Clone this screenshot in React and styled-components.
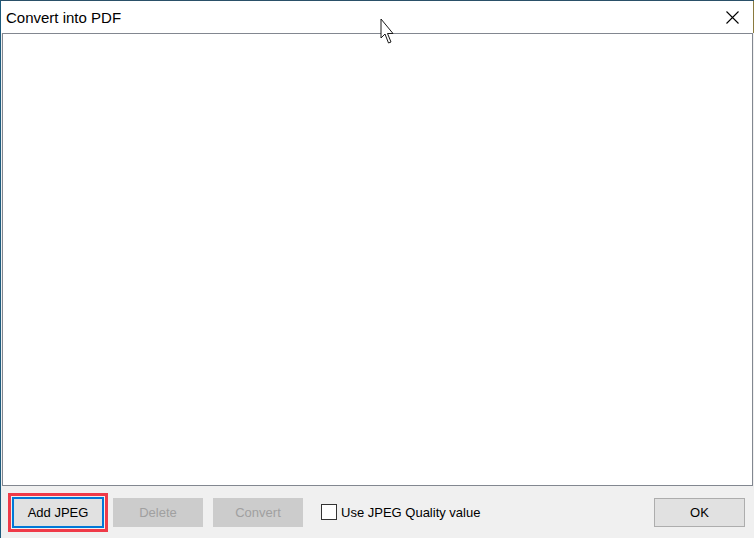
import React from 'react';
import styled, { createGlobalStyle } from 'styled-components';

const GlobalStyle = createGlobalStyle`
  html, body {
    margin: 0;
    padding: 0;
    background: #f0f0f0;
  }
  * {
    box-sizing: border-box;
  }
`;

const Window = styled.div`
  position: relative;
  width: 754px;
  height: 538px;
  display: flex;
  flex-direction: column;
  background: #f0f0f0;
  border-left: 1px solid #1d5b7d;
  border-top: 1px solid #2a5068;
  font-family: 'Liberation Sans', Arial, sans-serif;
  overflow: hidden;
`;

const TitleBar = styled.div`
  height: 32px;
  display: flex;
  align-items: center;
  background: #ffffff;
  padding: 0 0 0 5px;
  border-right: 1px solid #8a7a3e;
`;

const TitleText = styled.span`
  font-size: 15px;
  color: #000000;
  padding-top: 1px;
`;

const CloseButton = styled.button`
  margin-left: auto;
  width: 42px;
  height: 32px;
  border: none;
  padding: 0;
  background: transparent;
  display: flex;
  align-items: center;
  justify-content: center;
`;

const ListBox = styled.div`
  height: 453px;
  margin: 0 1px;
  background: #ffffff;
  border: 1px solid #828790;
`;

const BottomBar = styled.div`
  flex: 1;
  display: flex;
  align-items: center;
  padding: 0 9px 0 11px;
`;

const Button = styled.button`
  width: ${(p) => (p.$wide ? '91px' : '90px')};
  height: 29px;
  margin-right: ${(p) => p.$gap || 0}px;
  padding: 0;
  font-family: 'Liberation Sans', Arial, sans-serif;
  font-size: 13px;
  color: ${(p) => (p.disabled ? '#a0a0a0' : '#000000')};
  background: ${(p) => (p.disabled ? '#cccccc' : '#e1e1e1')};
  border: 1px solid ${(p) => (p.disabled ? '#cccccc' : '#adadad')};
`;

const FocusButton = styled(Button)`
  width: 92px;
  height: 31px;
  border: 2px solid #0078d7;
  outline: 3px solid #ef3a48;
  outline-offset: 1px;
`;

const CheckLabel = styled.label`
  display: flex;
  align-items: center;
  gap: 4px;
  margin-left: 10px;
  font-size: 13px;
  color: #000000;
`;

const CheckBox = styled.span`
  width: 16px;
  height: 16px;
  background: #ffffff;
  border: 1px solid #333333;
`;

const OkButton = styled(Button)`
  margin-left: auto;
`;

const Cursor = styled.svg`
  position: absolute;
  left: 379px;
  top: 17px;
`;

export default function App() {
  return (
    <>
      <GlobalStyle />
      <Window>
        <TitleBar>
          <TitleText>Convert into PDF</TitleText>
          <CloseButton aria-label="Close">
            <svg width="13" height="13" viewBox="0 0 13 13">
              <path d="M0.5 0.5 L12.5 12.5 M12.5 0.5 L0.5 12.5" stroke="#000" strokeWidth="1.1" />
            </svg>
          </CloseButton>
        </TitleBar>
        <ListBox />
        <BottomBar>
          <FocusButton $gap={9}>Add JPEG</FocusButton>
          <Button disabled $gap={10}>Delete</Button>
          <Button disabled $gap={8}>Convert</Button>
          <CheckLabel>
            <CheckBox />
            Use JPEG Quality value
          </CheckLabel>
          <OkButton $wide>OK</OkButton>
        </BottomBar>
        <Cursor width="15" height="27" viewBox="0 0 15 27">
          <path
            d="M1 1 L1 20 L5 16 L8.5 25 L11 24 L7.5 15.5 L13 15.5 Z"
            fill="#ffffff"
            stroke="#1a1a1a"
            strokeWidth="1"
            strokeLinejoin="miter"
          />
        </Cursor>
      </Window>
    </>
  );
}
